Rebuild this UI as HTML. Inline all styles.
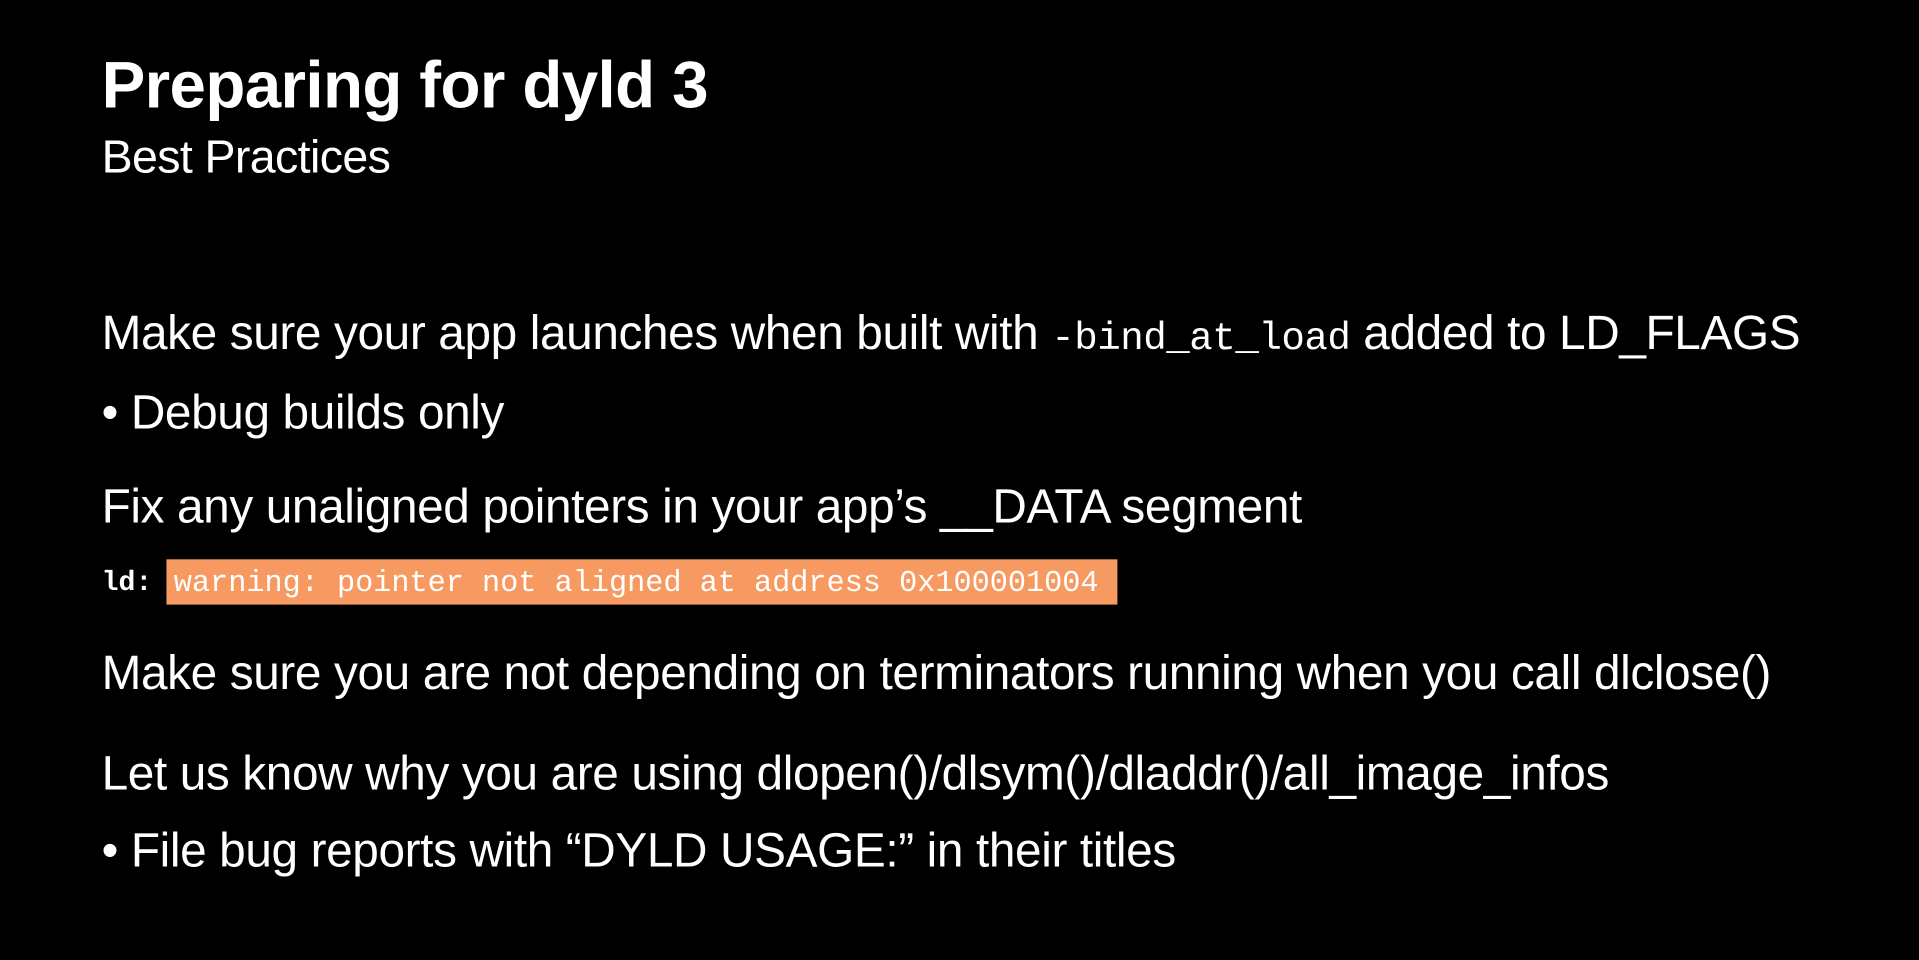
<!DOCTYPE html>
<html><head><meta charset="utf-8"><style>
html,body{margin:0;padding:0;background:#000;width:1919px;height:959px;overflow:hidden}
body{font-family:"Liberation Sans",sans-serif;color:#fff}
#w{position:absolute;left:0;top:0;width:1568px;height:784px;transform:scale(1.2239);transform-origin:0 0}
.t{position:absolute;left:83px;white-space:nowrap;line-height:1}
.b{font-size:39px;letter-spacing:-0.3px}
.m{font-family:"Liberation Mono",monospace}
</style></head><body><div id="w">
<div class="t" style="top:44px;font-size:53.5px;font-weight:bold;letter-spacing:-0.5px">Preparing for dyld 3</div>
<div class="t" style="top:110px;font-size:38px;letter-spacing:-0.5px">Best Practices</div>
<div class="t b" style="top:253px">Make sure your app launches when built with <span class="m" style="font-size:32px;letter-spacing:-0.4px">-bind_at_load</span> added to LD_FLAGS</div>
<div class="t b" style="top:318px">• Debug builds only</div>
<div class="t b" style="top:395px">Fix any unaligned pointers in your app’s __DATA segment</div>
<div class="t m" style="top:465px;font-size:23px;font-weight:bold">ld:</div>
<div style="position:absolute;left:136px;top:457px;width:777px;height:37px;background:#f79a62"></div>
<div class="t m" style="left:142px;top:465px;font-size:24.7px">warning: pointer not aligned at address 0x100001004</div>
<div class="t b" style="top:531px">Make sure you are not depending on terminators running when you call dlclose()</div>
<div class="t b" style="top:613px">Let us know why you are using dlopen()/dlsym()/dladdr()/all_image_infos</div>
<div class="t b" style="top:676px">• File bug reports with “DYLD USAGE:” in their titles</div>
</div></body></html>
